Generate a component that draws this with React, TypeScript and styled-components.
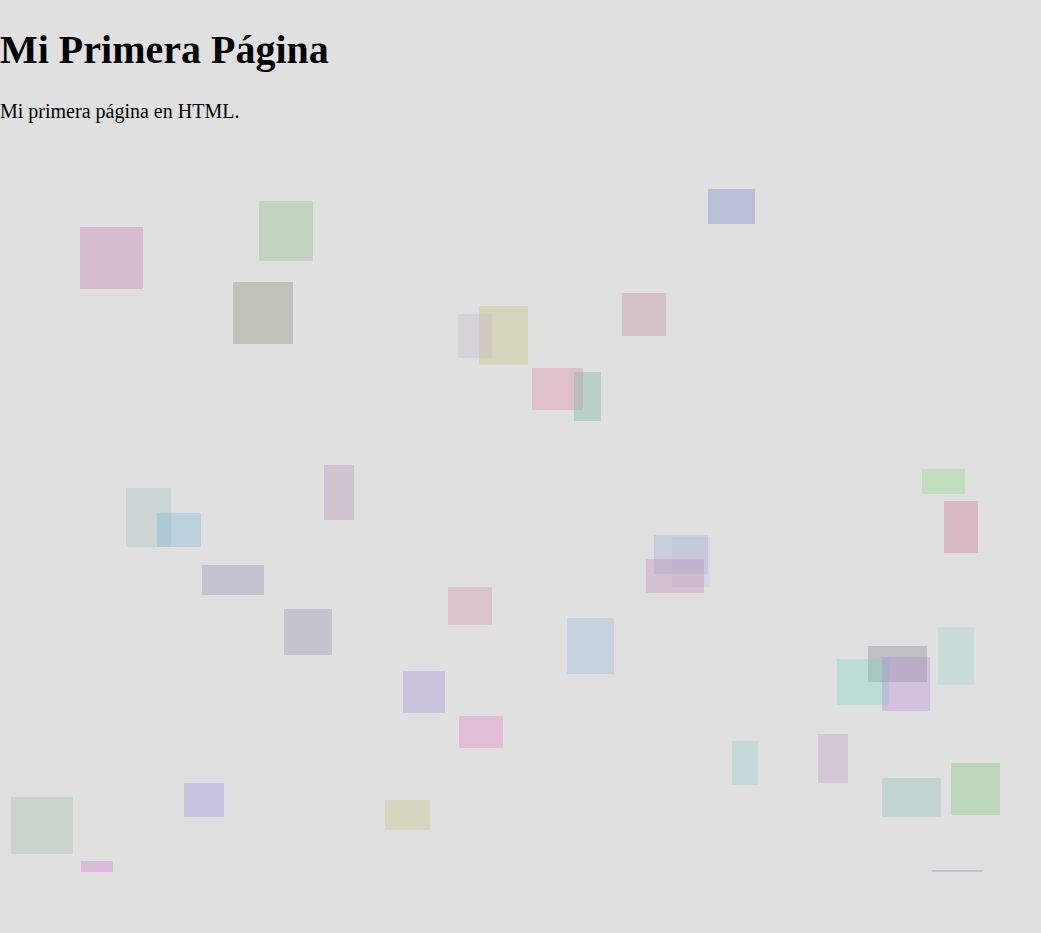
import React from "react";
import styled, { createGlobalStyle } from "styled-components";

const GlobalStyle = createGlobalStyle`
  html,
  body {
    margin: 0;
    padding: 0;
    background-color: #e0e0e0;
    color: #000;
    font-family: "Liberation Serif", "Times New Roman", serif;
  }
`;

const Page = styled.div`
  width: 100%;
`;

const Title = styled.h1`
  font-size: 40px;
  font-weight: bold;
  line-height: 46px;
  margin: 27px 0 27px;
`;

const Intro = styled.p`
  font-size: 20px;
  line-height: 23px;
  margin: 0 0 17px;
`;

// free canvas of translucent squares; the top edge sits at y=140 on the page
const Canvas = styled.div`
  position: relative;
  width: 100%;
  height: 732px;
  overflow: hidden;
`;

type TileProps = {
  $x: number;
  $y: number;
  $w: number;
  $h: number;
  $c: string;
};

const Tile = styled.div<TileProps>`
  position: absolute;
  left: ${(p) => p.$x}px;
  top: ${(p) => p.$y}px;
  width: ${(p) => p.$w}px;
  height: ${(p) => p.$h}px;
  background-color: ${(p) => p.$c};
`;

const CANVAS_TOP = 140;
const ALPHA = 0.3;
const BG = 224;

// the colours were read off the grey page; turn them back into the
// translucent fill that gives that colour over #e0e0e0
const tint = (hex: string) => {
  const n = parseInt(hex.slice(1), 16);
  const ch = [(n >> 16) & 255, (n >> 8) & 255, n & 255].map((v) =>
    Math.max(0, Math.min(255, Math.round((v - BG * (1 - ALPHA)) / ALPHA)))
  );
  return `rgba(${ch[0]}, ${ch[1]}, ${ch[2]}, ${ALPHA})`;
};

// x, y, width, height, colour seen on the page
const squares: [number, number, number, number, string][] = [
  [80, 227, 63, 62, "#d7bdd0"],
  [259, 201, 54, 60, "#c3d4c0"],
  [233, 282, 60, 62, "#bec4ba"],
  [708, 189, 47, 35, "#bac0d6"],
  [479, 306, 49, 59, "#d6d5bb"],
  [458, 314, 34, 44, "#d8d1da"],
  [622, 293, 44, 43, "#d3c2c8"],
  [532, 368, 51, 42, "#e0c2cc"],
  [574, 372, 27, 49, "#bbd1ca"],
  [126, 488, 45, 59, "#ccd6d4"],
  [157, 513, 44, 34, "#bcd1de"],
  [324, 465, 30, 55, "#d0c4d2"],
  [202, 565, 62, 30, "#c5c4d2"],
  [284, 609, 48, 46, "#c6c4cf"],
  [448, 587, 44, 38, "#d9c6cb"],
  [403, 671, 42, 42, "#cbc3dd"],
  [459, 716, 44, 32, "#dfbfd6"],
  [654, 535, 54, 39, "#c9cfda"],
  [672, 537, 38, 50, "#d6d6de"],
  [646, 559, 58, 34, "#d5c2d2"],
  [567, 618, 47, 56, "#c6d3dd"],
  [922, 469, 43, 25, "#c1dfbf"],
  [944, 501, 34, 52, "#d9bac5"],
  [938, 627, 36, 58, "#c9dbd6"],
  [868, 646, 59, 36, "#bfc1c1"],
  [837, 659, 52, 46, "#bfdcd8"],
  [882, 657, 48, 54, "#d3c3de"],
  [11, 797, 62, 57, "#cad5cc"],
  [81, 861, 32, 11, "#dbbcd9"],
  [184, 783, 40, 34, "#c7c4df"],
  [385, 800, 45, 30, "#d5d6bf"],
  [732, 741, 26, 44, "#c5d9d9"],
  [818, 734, 30, 49, "#d4c8d6"],
  [882, 778, 59, 39, "#c3d5d1"],
  [951, 763, 49, 52, "#bcd6bb"],
  [932, 870, 50, 4, "#c0c0d8"],
];

const App = (): JSX.Element => {
  return (
    <Page>
      <GlobalStyle />
      <Title>Mi Primera Página</Title>
      <Intro>Mi primera página en HTML.</Intro>
      <Canvas>
        {squares.map(([x, y, w, h, c], i) => (
          <Tile
            key={i}
            $x={x}
            $y={y - CANVAS_TOP}
            $w={w}
            $h={h}
            $c={tint(c)}
          />
        ))}
      </Canvas>
    </Page>
  );
};

export default App;
